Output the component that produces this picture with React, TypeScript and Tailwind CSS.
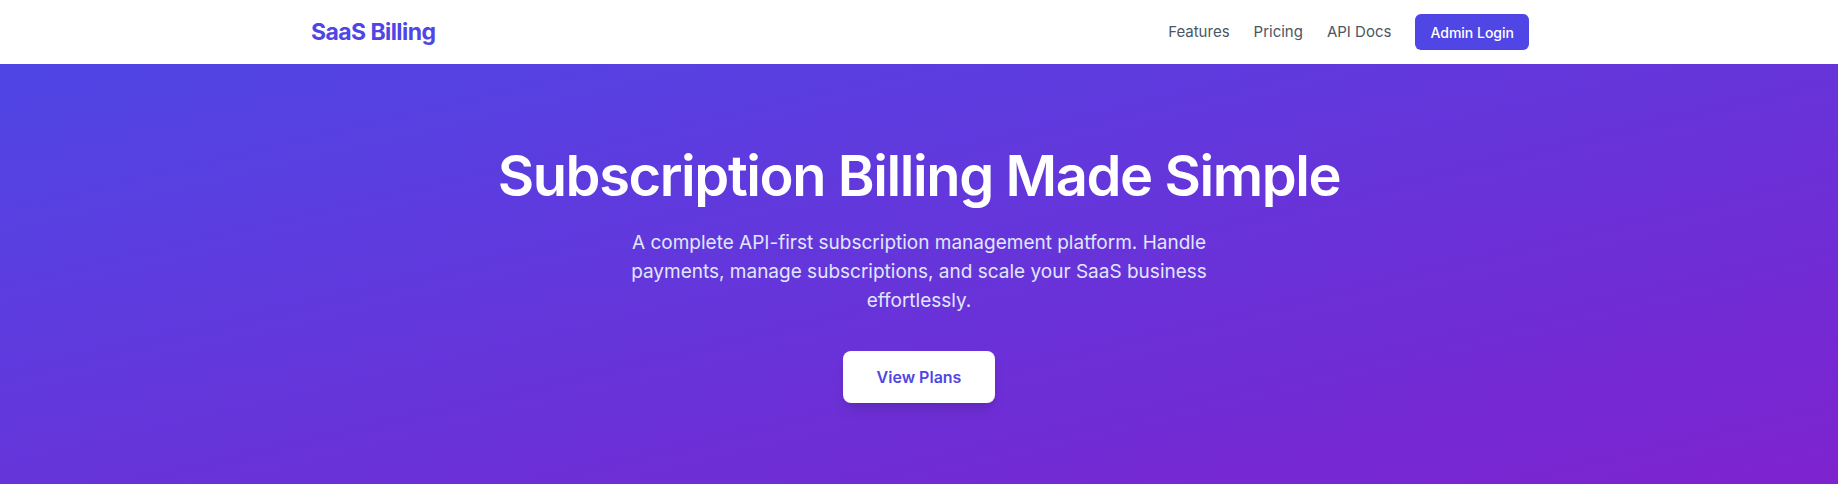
import * as React from "react";

const links = ["Features", "Pricing", "API Docs"];

export default function App() {
  return (
    <div className="min-h-screen bg-white font-['Inter',sans-serif] antialiased">
      <nav className="bg-white shadow-sm">
        <div className="mx-auto flex h-16 max-w-7xl items-center justify-between pl-8 pr-[30px]">
          <a href="#" className="text-[23px] font-bold tracking-tight text-[#4f46e5]">SaaS Billing</a>
          <div className="flex items-center gap-6">
            {links.map((l) => (
              <a key={l} href="#" className="text-[15px] text-[#4b5563] hover:text-[#4f46e5]">{l}</a>
            ))}
            <button className="h-9 rounded-md bg-[#4f46e5] px-[15px] text-[14px] font-medium text-white">Admin Login</button>
          </div>
        </div>
      </nav>

      <section className="bg-linear-to-br/srgb from-[#4f46e5] to-[#7e22ce] pb-24 pt-[80px] text-center">
        <div className="mx-auto max-w-7xl px-8">
          <h1 className="text-[56px] font-semibold leading-[64px] tracking-tight text-white">Subscription Billing Made Simple</h1>
          <p className="mx-auto mt-5 max-w-[600px] text-[19px] leading-[29px] text-[#e0e7ff]">
            A complete API-first subscription management platform. Handle payments, manage subscriptions, and scale your SaaS business effortlessly.
          </p>
          <button className="mt-[36px] rounded-lg bg-white px-[34px] py-3.5 text-[16px] font-semibold text-[#4f46e5] shadow-lg">View Plans</button>
        </div>
      </section>
    </div>
  );
}
